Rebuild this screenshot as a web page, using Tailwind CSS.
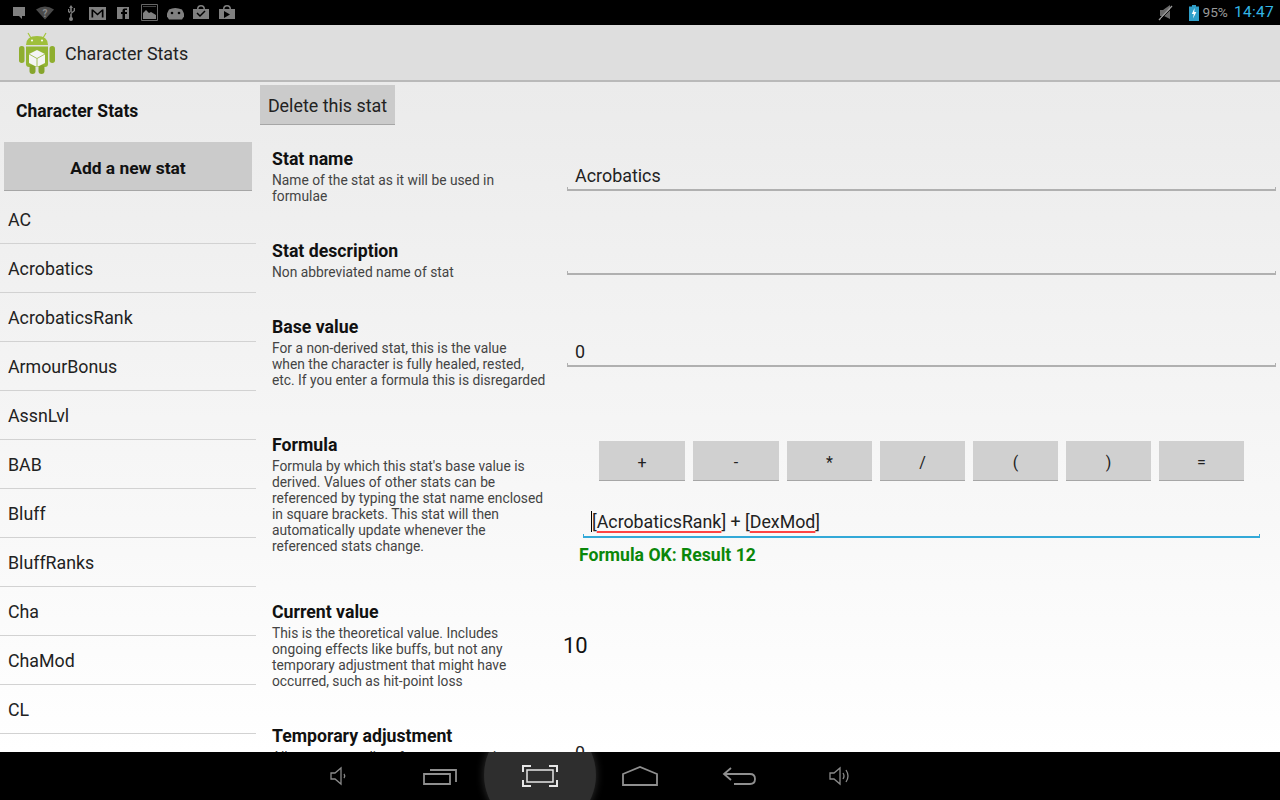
<!DOCTYPE html>
<html>
<head>
<meta charset="utf-8">
<script src="https://cdn.jsdelivr.net/npm/@tailwindcss/browser@4"></script>
</head>
<body class="m-0 overflow-hidden">
<div class="w-[1280px] h-[800px] flex flex-col font-['Roboto',sans-serif] bg-black text-black overflow-hidden">
  <!-- status bar -->
  <div class="h-[25px] shrink-0 bg-black flex items-center justify-between">
    <div class="flex items-center h-full relative w-[260px]">
      <svg width="260" height="25" viewBox="0 0 260 25" fill="#808080">
        <path d="M13 7h12v9h-3v3l-3-3h-6z"/>
        <path d="M36 9.500q9-6 18 0l-9 10z" fill="#4a4a4a"/>
        <text x="42.500" y="16.500" font-size="10" font-weight="700" fill="#8c8c8c" font-family="Roboto">?</text>
        <path d="M71 5l2 3h-1.200v11h-1.600V8H69zM68 9v3l3 2v-1.800l-1.800-1.200V9zM75 8v3l-3 2.500v-1.800l1.700-1.300V8z"/><circle cx="71" cy="19" r="2"/>
        <path d="M89 7h17v13H89zM91.500 9.500v8h1.700v-6l4.300 4 4.300-4v6h1.700v-8h-1.500l-4.500 4-4.500-4z" fill-rule="evenodd"/>
        <path d="M117 7h12v12h-4v-5h2v-2h-2v-2h2V8.500h-2.500q-2 0-2 2V12h-1.500v2h1.500v5H117z"/>
        <path d="M141.500 4.500h16v16h-16z" fill="none" stroke="#666"/>
        <path d="M143 19v-6l3-3 3 3 2-1 5 3v4z"/><path d="M143 6h13v1h-13z" fill="#444"/>
        <path d="M169 9.500q6-3 13 0l2 4v3l-2 3h-13l-2-3v-3z"/><circle cx="172" cy="13" r="1.300" fill="#000"/><circle cx="179" cy="13" r="1.300" fill="#000"/>
        <path d="M193 9h4q0-4 4-4t4 4h4v10h-16zM198.500 9h5q0-2.500-2.500-2.500T198.500 9z" fill-rule="evenodd"/><path d="M197 13l3 3 5-5" stroke="#000" stroke-width="1.500" fill="none"/>
        <path d="M219 9h4q0-4 4-4t4 4h4v10h-16zM224.500 9h5q0-2.500-2.500-2.500T224.500 9z" fill-rule="evenodd"/><path d="M224 11l6 3.500-6 3.500z" fill="#000"/>
      </svg>
    </div>
    <div class="flex items-center h-full">
      <svg width="16" height="17" viewBox="0 0 16 17" class="mr-[15px]"><path d="M2 6h3l7-5v14l-6-3H2z" fill="#6a6a6a"/><path d="M1 16L14 2" stroke="#9a9a9a" stroke-width="1.300"/><path d="M3 15L14 4" stroke="#000" stroke-width="0.800"/></svg>
      <svg width="10" height="16" viewBox="0 0 10 16"><path d="M3 0h4v1.500h3V16H0V1.500h3z" fill="#2f9fc9"/><path d="M5.500 3L2.800 9h2L4 13.500 7.400 7H5.300z" fill="#fff"/></svg>
      <span class="text-[13.700px] text-[#9a9a9a] ml-[3px] leading-none">95%</span>
      <span class="text-[15.500px] text-[#33b5e5] ml-[6px] mr-[6px] leading-none tracking-[0.3px]">14:47</span>
    </div>
  </div>

  <!-- action bar -->
  <div class="h-[57px] shrink-0 bg-[#dedede] border-b-2 border-[#b9b9b9] flex items-center pl-[19px]">
    <svg width="36" height="42" viewBox="0 0 36 42" class="mt-[1px]">
      <path d="M9 1l3 5M27 1l-3 5" stroke="#a4c639" stroke-width="1.200"/>
      <path d="M7 13q0-9 11-9t11 9z" fill="#9fbf3b"/>
      <circle cx="13" cy="8.500" r="1" fill="#fff"/><circle cx="23" cy="8.500" r="1" fill="#fff"/>
      <rect x="0" y="14" width="5.500" height="17" rx="2.700" fill="#8fae2f"/><rect x="30.500" y="14" width="5.500" height="17" rx="2.700" fill="#8fae2f"/>
      <path d="M7 14.500h22V32q0 3-3 3H10q-3 0-3-3z" fill="#93b534"/>
      <rect x="10.500" y="33" width="6" height="9" rx="3" fill="#86a52c"/><rect x="19.500" y="33" width="6" height="9" rx="3" fill="#86a52c"/>
      <path d="M18 18l8 4v9l-8 4-8-4v-9z" fill="#f4f4f4"/><path d="M18 26.500l8-4.500M18 26.500L10 22M18 26.500V35" stroke="#93b534" stroke-width="0.800" fill="none"/>
    </svg>
    <span class="ml-[10px] pt-[4px] text-[17.900px] text-[#222]">Character Stats</span>
  </div>

  <!-- content -->
  <div class="h-[670px] shrink-0 flex overflow-hidden bg-gradient-to-b from-[#ebebeb] to-white">
    <!-- left list -->
    <div class="w-[256px] shrink-0">
      <div class="h-[60px] flex items-center pl-[16px] pb-[2px] font-bold text-[17.500px] text-[#111]">Character Stats</div>
      <div class="mx-[4px] h-[49px] pt-[4px] bg-[#cbcbcb] border-b border-[#a6a6a6] flex items-center justify-center font-bold text-[17.400px] text-[#111]">Add a new stat</div>
      <div class="mt-[4px] text-[17.800px] text-[#222]">
        <div class="h-[49px] pl-[8px] pt-[2px] flex items-center border-b border-[#d2d2d2]">AC</div>
        <div class="h-[49px] pl-[8px] pt-[2px] flex items-center border-b border-[#d2d2d2]">Acrobatics</div>
        <div class="h-[49px] pl-[8px] pt-[2px] flex items-center border-b border-[#d2d2d2]">AcrobaticsRank</div>
        <div class="h-[49px] pl-[8px] pt-[2px] flex items-center border-b border-[#d2d2d2]">ArmourBonus</div>
        <div class="h-[49px] pl-[8px] pt-[2px] flex items-center border-b border-[#d2d2d2]">AssnLvl</div>
        <div class="h-[49px] pl-[8px] pt-[2px] flex items-center border-b border-[#d2d2d2]">BAB</div>
        <div class="h-[49px] pl-[8px] pt-[2px] flex items-center border-b border-[#d2d2d2]">Bluff</div>
        <div class="h-[49px] pl-[8px] pt-[2px] flex items-center border-b border-[#d2d2d2]">BluffRanks</div>
        <div class="h-[49px] pl-[8px] pt-[2px] flex items-center border-b border-[#d2d2d2]">Cha</div>
        <div class="h-[49px] pl-[8px] pt-[2px] flex items-center border-b border-[#d2d2d2]">ChaMod</div>
        <div class="h-[49px] pl-[8px] pt-[2px] flex items-center border-b border-[#d2d2d2]">CL</div>
      </div>
    </div>

    <!-- right form -->
    <div class="flex-1 pl-[4px] pt-[3px]">
      <div class="w-[135px] h-[40px] pt-[4px] bg-[#cbcbcb] border-b border-[#a6a6a6] flex items-center justify-center text-[17.900px] text-[#222]">Delete this stat</div>
      <div class="pl-[12px] pt-[23px]">
        <!-- Stat name -->
        <div class="h-[92px] flex">
          <div class="w-[295px] shrink-0 pt-[1px]">
            <div class="font-bold text-[17.700px] leading-[21px] text-[#111]">Stat name</div>
            <div class="mt-[2px] text-[13.800px] leading-[16px] text-[#444] w-[275px]">Name of the stat as it will be used in formulae</div>
          </div>
          <div class="w-[709px] pt-[15px]">
            <div class="pl-[8px] text-[17.900px] leading-[26px] text-[#222]">Acrobatics</div>
            <div class="-mt-[2px] h-[4px] border-x border-b-2 border-[#b0b0b0]"></div>
          </div>
        </div>
        <!-- Stat description -->
        <div class="h-[76px] flex">
          <div class="w-[295px] shrink-0 pt-[1px]">
            <div class="font-bold text-[17.700px] leading-[21px] text-[#111]">Stat description</div>
            <div class="mt-[2px] text-[13.800px] leading-[16px] text-[#444] w-[275px]">Non abbreviated name of stat</div>
          </div>
          <div class="w-[709px] pt-[31px]">
            <div class="h-[4px] border-x border-b-2 border-[#b0b0b0]"></div>
          </div>
        </div>
        <!-- Base value -->
        <div class="h-[118px] flex">
          <div class="w-[295px] shrink-0 pt-[1px]">
            <div class="font-bold text-[17.700px] leading-[21px] text-[#111]">Base value</div>
            <div class="mt-[2px] text-[13.800px] leading-[16px] text-[#444] w-[275px]">For a non-derived stat, this is the value<br>when the character is fully healed, rested,<br>etc. If you enter a formula this is disregarded</div>
          </div>
          <div class="w-[709px] pt-[23px]">
            <div class="pl-[8px] text-[17.900px] leading-[26px] text-[#222]">0</div>
            <div class="-mt-[2px] h-[4px] border-x border-b-2 border-[#b0b0b0]"></div>
          </div>
        </div>
        <!-- Formula -->
        <div class="h-[167px] flex">
          <div class="w-[295px] shrink-0 pt-[1px]">
            <div class="font-bold text-[17.700px] leading-[21px] text-[#111]">Formula</div>
            <div class="mt-[2px] text-[13.800px] leading-[16px] text-[#444] w-[275px]">Formula by which this stat's base value is derived. Values of other stats can be referenced by typing the stat name enclosed in square brackets. This stat will then automatically update whenever the referenced stats change.</div>
          </div>
          <div class="w-[709px] shrink-0">
            <div class="pl-[32px] pt-[7px] flex text-[16px] text-[#222]">
              <div class="w-[86px] h-[40px] pt-[5px] bg-[#d0d0d0] border-b border-[#a6a6a6] flex items-center justify-center">+</div>
              <div class="w-[86px] h-[40px] pt-[5px] ml-[8px] bg-[#d0d0d0] border-b border-[#a6a6a6] flex items-center justify-center">-</div>
              <div class="w-[85px] h-[40px] pt-[5px] ml-[8px] bg-[#d0d0d0] border-b border-[#a6a6a6] flex items-center justify-center">*</div>
              <div class="w-[85px] h-[40px] pt-[5px] ml-[8px] bg-[#d0d0d0] border-b border-[#a6a6a6] flex items-center justify-center">/</div>
              <div class="w-[85px] h-[40px] pt-[5px] ml-[8px] bg-[#d0d0d0] border-b border-[#a6a6a6] flex items-center justify-center">(</div>
              <div class="w-[85px] h-[40px] pt-[5px] ml-[8px] bg-[#d0d0d0] border-b border-[#a6a6a6] flex items-center justify-center">)</div>
              <div class="w-[85px] h-[40px] pt-[5px] ml-[8px] bg-[#d0d0d0] border-b border-[#a6a6a6] flex items-center justify-center">=</div>
            </div>
            <div class="ml-[16px] w-[677px] mt-[28px]">
              <div class="pl-[8px] text-[17.800px] leading-[25px] text-[#222] whitespace-pre"><span class="border-l border-black">[</span><span class="underline decoration-[#f44] decoration-2 underline-offset-[3px]">AcrobaticsRank</span>] + [<span class="underline decoration-[#f44] decoration-2 underline-offset-[3px]">DexMod</span>]</div>
              <div class="h-[4px] border-x border-b-2 border-[#33a9d8]"></div>
            </div>
            <div class="ml-[12px] mt-[7px] font-bold text-[17.600px] leading-[21px] text-[#0a870a]">Formula OK: Result 12</div>
          </div>
        </div>
        <!-- Current value -->
        <div class="h-[124px] flex">
          <div class="w-[291px] shrink-0 pt-[1px]">
            <div class="font-bold text-[17.700px] leading-[21px] text-[#111]">Current value</div>
            <div class="mt-[2px] text-[13.800px] leading-[16px] text-[#444] w-[250px]">This is the theoretical value. Includes ongoing effects like buffs, but not any temporary adjustment that might have occurred, such as hit-point loss</div>
          </div>
          <div class="text-[22px] leading-[26px] mt-[32px] text-[#111]">10</div>
        </div>
        <!-- Temporary adjustment -->
        <div class="flex">
          <div class="w-[303px] shrink-0 pt-[1px]">
            <div class="font-bold text-[17.700px] leading-[21px] text-[#111]">Temporary adjustment</div>
            <div class="mt-[2px] text-[13.800px] leading-[16px] text-[#444] w-[275px]">Allows you to adjust for temporary changes</div>
          </div>
          <div class="text-[17.900px] leading-[28px] mt-[14px] text-[#222]">0</div>
        </div>
      </div>
    </div>
  </div>

  <!-- nav bar -->
  <div class="h-[48px] shrink-0 bg-black relative overflow-hidden flex items-center pl-[289px]">
    <div class="absolute left-[484px] top-[-33px] w-[112px] h-[112px] rounded-full bg-[#2e2e2e] shadow-[0_0_8px_rgba(70,70,70,0.7)]"></div>
    <div class="relative w-[100px] h-[48px] flex items-center justify-center">
      <svg width="20" height="20" viewBox="0 0 20 20" fill="none" stroke="#8a8a8a" stroke-width="1.300"><path d="M2 7h4l6-5v16l-6-5H2zM15 8q1.500 2 0 4"/></svg>
    </div>
    <div class="relative w-[100px] h-[48px] flex items-center justify-center">
      <svg width="36" height="20" viewBox="0 0 36 20" fill="none" stroke="#8f8f8f" stroke-width="1.800" class="ml-[2px]"><path d="M2 8h26v10H2zM8 4h26v12"/></svg>
    </div>
    <div class="relative w-[100px] h-[48px] flex items-center justify-center">
      <svg width="36" height="22" viewBox="0 0 36 22" fill="none" stroke="#e6e6e6" stroke-width="2" class="ml-[1px]"><path d="M5 5h26v12H5z" stroke-width="1.500"/><path d="M9 1H1v6M27 1h8v6M9 21H1v-6M27 21h8v-6"/></svg>
    </div>
    <div class="relative w-[100px] h-[48px] flex items-center justify-center">
      <svg width="38" height="20" viewBox="0 0 38 20" fill="none" stroke="#8f8f8f" stroke-width="1.800" class="ml-[2px]"><path d="M2 19V8L19 1l17 7v11z"/></svg>
    </div>
    <div class="relative w-[100px] h-[48px] flex items-center justify-center">
      <svg width="36" height="22" viewBox="0 0 36 22" fill="none" stroke="#8f8f8f" stroke-width="1.800"><path d="M10 3L3 9l7 6M3 9h26q5 0 5 5t-5 5H13"/></svg>
    </div>
    <div class="relative w-[100px] h-[48px] flex items-center justify-center">
      <svg width="22" height="20" viewBox="0 0 22 20" fill="none" stroke="#8a8a8a" stroke-width="1.300"><path d="M2 7h4l6-5v16l-6-5H2zM15 7q2 3 0 6M18 4q4 6 0 12"/></svg>
    </div>
  </div>
</div>
</body>
</html>
